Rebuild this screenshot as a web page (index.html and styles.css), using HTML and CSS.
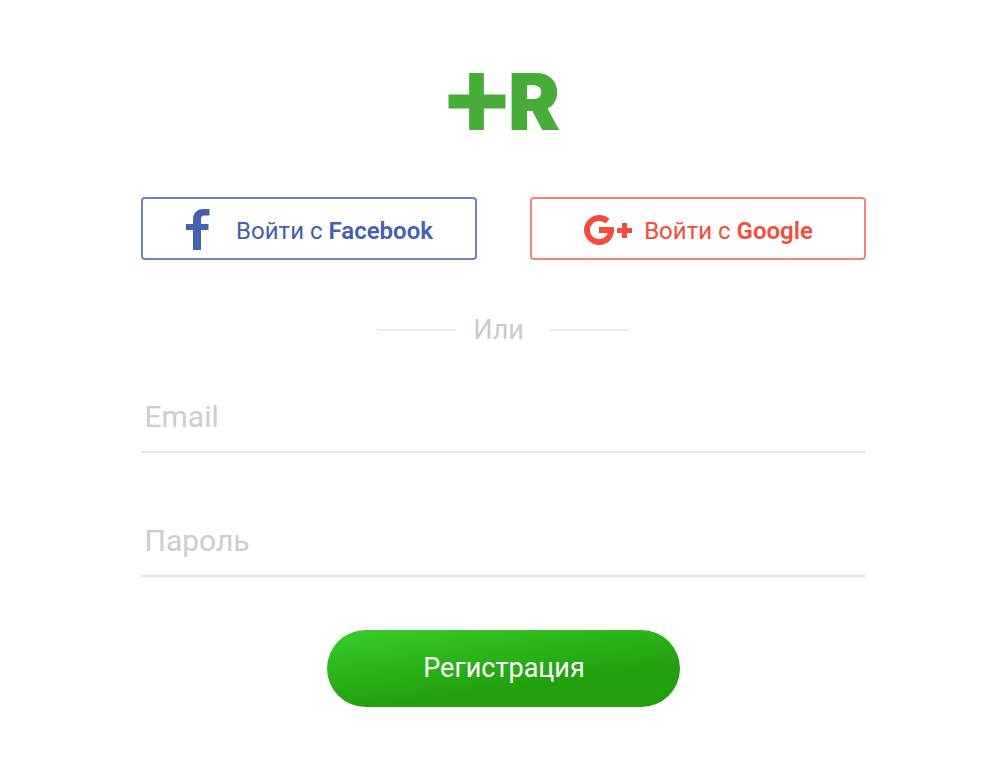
FILE: index.html
```
<!DOCTYPE html>
<html lang="ru">
<head>
<meta charset="utf-8">
<meta name="viewport" content="width=device-width, initial-scale=1">
<title>Регистрация</title>
<link rel="stylesheet" href="styles.css">
</head>
<body>
<main class="signup">
  <div class="logo">
    <svg class="logo-plus" viewBox="0 0 58 58" aria-hidden="true"><path d="M21 0h15v22h22v14H36v22H21V36H0V22h21z"/></svg>
    <span class="logo-letter">R</span>
  </div>
  <div class="social">
    <button type="button" class="social-button facebook">
      <svg class="facebook-icon" viewBox="0 0 24 42" aria-hidden="true"><path d="M7 41V21H0v-6h7v-4C7 4 11 0 17 0h6.500v6.500H19c-3 0-4 1-4 4V15h7.500v6H15v20z"/></svg>
      <span class="social-label">Войти с <b>Facebook</b></span>
    </button>
    <button type="button" class="social-button google">
      <svg class="google-icon" viewBox="0 0 48 30" aria-hidden="true"><path d="M15 12h15c1 10-5 18-15 18C7 30 0 23 0 15S7 0 15 0c4 0 8 1.500 10.500 4L21.500 8.500C20 7 17.500 6 15 6c-5 0-9 4-9 9s4 9 9 9c4.500 0 7.500-2.500 8.500-6H15zM38 8h5v5h5v5h-5v5h-5v-5h-5v-5h5z"/></svg>
      <span class="social-label">Войти с <b>Google</b></span>
    </button>
  </div>
  <div class="divider"><span>Или</span></div>
  <form class="form">
    <input class="field" type="email" name="email" placeholder="Email" aria-label="Email">
    <input class="field" type="password" name="password" placeholder="Пароль" aria-label="Пароль">
    <button class="submit" type="submit">Регистрация</button>
  </form>
</main>
</body>
</html>
```
FILE: styles.css
```
* {
  box-sizing: border-box;
}

body {
  margin: 0;
  background: #fff;
  font-family: Roboto, "Liberation Sans", sans-serif;
}

button,
input {
  font-family: inherit;
}

.signup {
  max-width: 773px;
  margin: 0 auto;
  padding: 73px 24px 56px;
}

.logo {
  display: flex;
  justify-content: center;
  align-items: center;
  gap: 2px;
  height: 57px;
  padding-left: 2px;
  color: #46ae36;
}

.logo-plus {
  width: 58px;
  height: 57px;
  fill: currentColor;
}

.logo-letter {
  font-family: Inter, Roboto, sans-serif;
  font-size: 78px;
  font-weight: 900;
  line-height: 57px;
}

.social {
  display: grid;
  grid-template-columns: 1fr 1fr;
  gap: 53px;
  margin-top: 67px;
}

.social-button {
  display: flex;
  justify-content: center;
  align-items: center;
  height: 63px;
  padding: 2px 0 0 2px;
  border: 2px solid currentColor;
  border-radius: 4px;
  background: #fff;
  font-size: 24px;
}

.social-label {
  padding-top: 2px;
}

.social-button b {
  font-weight: 600;
}

.facebook {
  gap: 26px;
  border-color: #6d83c0;
  color: #4460ae;
}

.google {
  gap: 12px;
  border-color: #f98177;
  color: #f54b3b;
}

.facebook-icon,
.google-icon {
  flex: none;
  fill: currentColor;
}

.facebook-icon {
  width: 24px;
  height: 42px;
}

.google-icon {
  width: 48px;
  height: 30px;
}

.divider {
  display: flex;
  justify-content: center;
  align-items: center;
  margin-top: 53px;
  color: #cbcbcb;
  font-size: 27px;
  line-height: 34px;
}

.divider span {
  padding: 0 26px 0 17px;
}

.divider::before,
.divider::after {
  content: "";
  width: 79px;
  height: 2px;
  background: #ececec;
}

.form {
  display: flex;
  flex-direction: column;
  gap: 53px;
}

.field {
  width: 100%;
  height: 71px;
  padding: 0 4px;
  border: 0;
  border-bottom: 2px solid #e4e4f0;
  background: transparent;
  color: #444;
  font-size: 30px;
}

.field:first-child {
  margin-top: 35px;
}

.field::placeholder {
  color: #cdcdcd;
  opacity: 1;
}

.submit {
  align-self: center;
  width: 353px;
  max-width: 100%;
  height: 77px;
  padding: 0 0 2px 2px;
  border: 0;
  border-radius: 39px;
  background: linear-gradient(172deg, #38cd29 0%, #22a00e 66%);
  color: #fff;
  font-size: 27px;
}
```
